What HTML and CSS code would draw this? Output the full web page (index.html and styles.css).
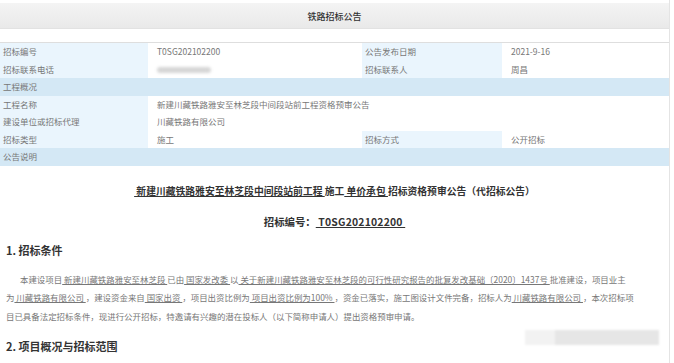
FILE: index.html
```html
<!DOCTYPE html>
<html lang="zh-CN">
<head>
  <meta charset="UTF-8">
  <meta name="viewport" content="width=device-width, initial-scale=1.0">
  <link rel="stylesheet" href="styles.css">
</head>
<body>

<div class="page">
  <div class="topbar">铁路招标公告</div>

  <div class="info">
    <div class="lab">招标编号</div>
    <div class="val">T0SG202102200</div>
    <div class="lab">公告发布日期</div>
    <div class="val">2021-9-16</div>

    <div class="lab">招标联系电话</div>
    <div class="val"><span class="blurred"></span></div>
    <div class="lab">招标联系人</div>
    <div class="val">周昌</div>

    <div class="band">工程概况</div>

    <div class="lab">工程名称</div>
    <div class="val wide">新建川藏铁路雅安至林芝段中间段站前工程资格预审公告</div>

    <div class="lab">建设单位或招标代理</div>
    <div class="val wide">川藏铁路有限公司</div>

    <div class="lab">招标类型</div>
    <div class="val">施工</div>
    <div class="lab">招标方式</div>
    <div class="val">公开招标</div>

    <div class="band">公告说明</div>
  </div>

  <div class="notice">
    <p class="doc-title"><u>&nbsp;新建川藏铁路雅安至林芝段中间段站前工程&nbsp;</u>施工<u>&nbsp;单价承包&nbsp;</u>招标资格预审公告（代招标公告）</p>
    <p class="doc-code">招标编号：<u>&nbsp;T0SG202102200&nbsp;</u></p>

    <h3 class="section">1. 招标条件</h3>
    <p class="para">
      <span class="indent"></span>本建设项目<u>&nbsp;新建川藏铁路雅安至林芝段&nbsp;</u>已由<u>&nbsp;国家发改委&nbsp;</u>以<u>&nbsp;关于新建川藏铁路雅安至林芝段的可行性研究报告的批复发改基础〔2020〕1437号&nbsp;</u>批准建设，项目业主<br>
      为<u>&nbsp;川藏铁路有限公司&nbsp;</u>，建设资金来自<u>&nbsp;国家出资&nbsp;</u>，项目出资比例为<u>&nbsp;项目出资比例为100%&nbsp;</u>，资金已落实，施工图设计文件完备，招标人为<u>&nbsp;川藏铁路有限公司&nbsp;</u>，本次招标项<br>
      目已具备法定招标条件，现进行公开招标，特邀请有兴趣的潜在投标人（以下简称申请人）提出资格预审申请。
    </p>

    <h3 class="section">2. 项目概况与招标范围</h3>
  </div>

  <div class="smudge"><span></span></div>
</div>

</body>
</html>
```

FILE: styles.css
```css
body {
  margin: 0;
  background-color: #fff;
  color: #666;
  font-family: "Noto Sans CJK SC", "Noto Sans", sans-serif;
}

.page {
  position: relative;
  width: 669px;
  height: 363px;
  overflow: hidden;
  border-right: 1px solid #e4e4e4;
}

.topbar {
  margin-top: 3px;
  height: 25px;
  line-height: 27px;
  text-align: center;
  font-size: 9px;
  font-weight: 500;
  color: #333;
  background: linear-gradient(#f4f4f4, #e9e9e9);
  border-bottom: 1px solid #e2e2e2;
}

.info {
  display: grid;
  grid-template-columns: 148px 214px 140px 1fr;
  grid-auto-rows: 17.5px;
  margin-top: 13px;
  border-top: 1px solid #dedede;
  font-size: 8.5px;
  line-height: 17.5px;
  color: #777;
}

.lab {
  padding-left: 3px;
  background-color: #eaf5fd;
}

.val {
  padding-left: 9px;
  background-color: #fff;
}

.wide {
  grid-column: 2 / -1;
}

.band {
  grid-column: 1 / -1;
  padding-left: 3px;
  background-color: #d4e8f5;
}

.blurred {
  display: inline-block;
  width: 54px;
  height: 6px;
  vertical-align: middle;
  border-radius: 3px;
  background-color: #d6d6d6;
  filter: blur(1.5px);
}

.notice {
  padding: 0 6px;
}

.doc-title {
  margin: 18px 0 0;
  text-align: center;
  font-size: 9.8px;
  line-height: 14px;
  font-weight: bold;
  color: #333;
}

.doc-code {
  margin: 17px 0 0;
  text-align: center;
  font-size: 10.4px;
  line-height: 14px;
  font-weight: bold;
  color: #333;
}

.doc-code u {
  letter-spacing: 0.2px;
}

.section {
  margin: 14px 0 0;
  font-size: 11px;
  line-height: 15px;
  font-weight: bold;
  color: #333;
}

.para {
  margin: 12px 0 0;
  font-size: 8.45px;
  line-height: 18.5px;
  color: #777;
}

.para u {
  text-underline-offset: 1px;
}

.indent {
  display: inline-block;
  width: 14px;
}

.smudge {
  position: absolute;
  left: 525px;
  top: 330px;
  width: 134px;
  height: 15px;
  background-color: #f2f2f2;
  filter: blur(1px);
}

.smudge span {
  position: absolute;
  left: 30px;
  top: 0;
  width: 104px;
  height: 15px;
  background-color: #e6e6e6;
}
```
